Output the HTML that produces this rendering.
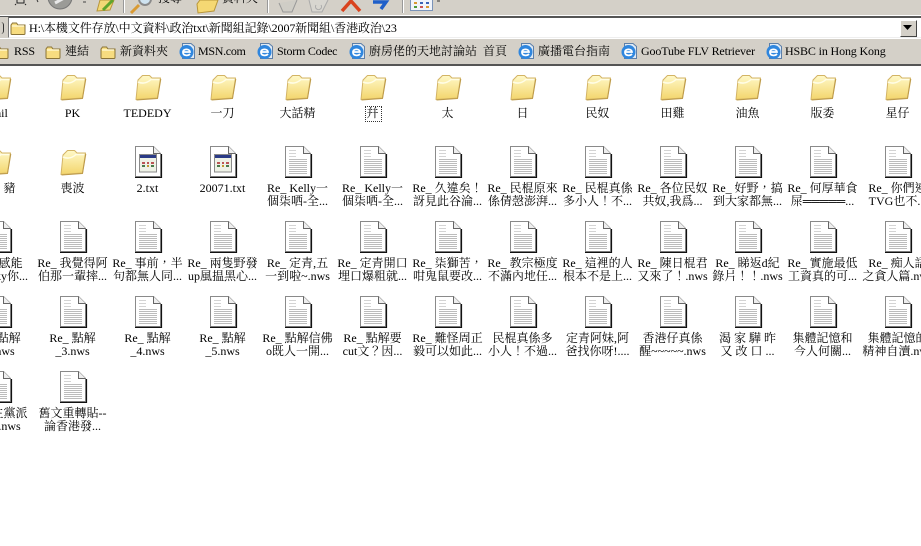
<!DOCTYPE html>
<html lang="zh-Hant"><head><meta charset="utf-8"><title>香港政治</title>
<style>
html,body{margin:0;padding:0;background:#fff}
body{width:921px;height:546px;position:relative;overflow:hidden;font:12px/13px "Liberation Serif","WenQuanYi Zen Hei","Noto Serif CJK TC",serif;color:#000}
.a{position:absolute}
.t{position:absolute;white-space:nowrap}
.l{letter-spacing:-.14px}
#tb{left:0;top:0;width:921px;height:66px;background:#d4d0c8}
.ln{position:absolute;left:0;width:921px;height:1px}
#grid{position:absolute;left:-40px;top:71px;display:grid;grid-template-columns:repeat(13,75px);grid-auto-rows:75px}
.c{position:relative;text-align:center;white-space:nowrap}
.c svg{display:block;margin-left:21px;width:32px;height:32px}
.c div{margin-top:4px;display:flex;flex-direction:column;align-items:center}
.c span{display:block;white-space:nowrap;position:relative}
</style></head><body>
<svg width="0" height="0" style="position:absolute"><defs>
<linearGradient id="fg" x1="0" y1="0" x2="0" y2="1"><stop offset="0" stop-color="#fff9c8"/><stop offset="1" stop-color="#f3d56c"/></linearGradient>
<symbol id="f" viewBox="0 0 32 32"><path d="M5 28.500 L7 9 L11.500 4.500 L18.500 4.500 L21 7 L29.500 7 L26.500 27 Z" fill="url(#fg)" stroke="#d3b465" stroke-linejoin="round"/><path d="M7 11 Q14 14 20 8.500 L28.500 8.500" fill="none" stroke="#fffde6" stroke-width="1.500"/><path d="M5.500 29 L26.500 27.500 L29.800 8" fill="none" stroke="#bd9a48" stroke-linejoin="round"/></symbol>
<symbol id="d" viewBox="0 0 32 32"><path d="M4.500 .5H22.500L29.500 7.500V30.500H4.500Z" fill="#fff" stroke="#8a8a8a"/><path d="M22.500 .5V7.500H29.500" fill="#eee" stroke="#666"/><path d="M30.500 8V31.500H4" fill="none" stroke="#111" stroke-width="1.200"/><path d="M8 4.500h7M8 7.500h7M8 10.500h7" stroke="#d4d4d4"/><path d="M8 13.500h18M8 15.500h18M8 17.500h18M8 19.500h18M8 21.500h18M8 23.500h18M8 25.500h18M8 27.500h18" stroke="#bcbcbc"/></symbol>
<symbol id="x" viewBox="0 0 32 32"><path d="M4.500 .5H22.500L29.500 7.500V30.500H4.500Z" fill="#fff" stroke="#8a8a8a"/><path d="M22.500 .5V7.500H29.500" fill="#eee" stroke="#666"/><path d="M30.500 8V31.500H4" fill="none" stroke="#111" stroke-width="1.200"/><rect x="8.500" y="8.500" width="17" height="17.500" fill="#eef2e6" stroke="#8a8a8a"/><rect x="9" y="9" width="16" height="3" fill="#2a3a86"/><path d="M11 17h3M16 17h2M20 17h3" stroke="#b55" stroke-width="2"/><path d="M11 20h3" stroke="#4a7a4a" stroke-width="2"/><path d="M16 20h2" stroke="#c09a30" stroke-width="2"/><path d="M20 20h3" stroke="#4a7a4a" stroke-width="2"/></symbol>
<symbol id="sf" viewBox="0 0 16 16"><path d="M1 5V13.500Q1 14.500 2 14.500H14Q15 14.500 15 13.500V5H8L6.500 3H2.500Z" fill="#f7dc80" stroke="#8a7338"/><path d="M2 6h12" stroke="#fff6cc" stroke-width="1.500"/></symbol>
<symbol id="ie" viewBox="0 0 16 16"><path d="M3.500 .5H12L15.500 3.500V15.500H3.500Z" fill="#dfeaf5" stroke="#5d7fa8"/><circle cx="7.500" cy="9" r="7" fill="#2f86de"/><path d="M4 9H11C11 5.800 4 5.200 4 9.200C4 12.800 8.800 13.200 11 11" fill="none" stroke="#fff" stroke-width="1.800"/></symbol>
</defs></svg>

<div id="tb" class="a"></div>
<div class="ln" style="top:15px;background:#fff"></div>
<div class="ln" style="top:16px;background:#555"></div>
<div class="ln" style="top:38px;background:#fff"></div>
<div class="ln" style="top:64px;height:2px;background:#555"></div>

<!-- toolbar clipped icons -->
<svg class="a" style="left:0;top:0" width="450" height="15" viewBox="0 0 450 15">
<path d="M17 0v3h7v-3M16 4l-1 1M25 4l1 1" stroke="#222" fill="none"/>
<path d="M37 0l1 2" stroke="#333"/>
<circle cx="60" cy="-3" r="12" fill="#9b9b97" stroke="#777"/><path d="M55 3 L66 -3" stroke="#e8e8e8" stroke-width="3"/>
<path d="M83 2h3" stroke="#444"/>
<path d="M97 11 L100 0H114L110 10Z" fill="#f3d875" stroke="#b8963a"/><path d="M103 10 L113 0" stroke="#5fa52c" stroke-width="3"/>
<path d="M123.500 0V13" stroke="#999"/><path d="M124.500 0V13" stroke="#fff"/>
<path d="M131 13 L139 5" stroke="#d99a33" stroke-width="3"/><circle cx="145" cy="-1" r="6" fill="#cfe3f0" stroke="#8a8a8a" stroke-width="2"/>
<path d="M197 4 L200 0H218L214 11 L198 13Z" fill="#f5d873" stroke="#b8963a"/>
<path d="M267.500 0V13" stroke="#999"/><path d="M268.500 0V13" stroke="#fff"/>
<path d="M279 3 L283 12H292L297 0" fill="#cfcdc6" stroke="#999"/>
<path d="M309 0 L312 12H322L328 0" fill="#d8d6d0" stroke="#aaa"/><path d="M316 5a3 3 0 1 0 5 0" fill="none" stroke="#aaa"/>
<path d="M342 11 L351 1 L360 11" fill="none" stroke="#d9431e" stroke-width="3.500"/>
<path d="M373 2 H386 L381 9" fill="none" stroke="#1f5fc9" stroke-width="3.500"/>
<path d="M402.500 0V13" stroke="#999"/><path d="M403.500 0V13" stroke="#fff"/>
<rect x="410.500" y="-2" width="22" height="12.500" fill="#f0f4fb" stroke="#7a93b8"/>
<path d="M414 3h3" stroke="#d99a33" stroke-width="2"/><path d="M420 3h3" stroke="#3c63b5" stroke-width="2"/><path d="M426 3h3" stroke="#3c63b5" stroke-width="2"/>
<path d="M414 7h3" stroke="#4d9a3b" stroke-width="2"/><path d="M420 7h3" stroke="#c55" stroke-width="2"/><path d="M426 7h3" stroke="#d99a33" stroke-width="2"/>
<path d="M437 1h3" stroke="#333"/>
</svg>
<div class="t" style="left:158px;top:-8px">搜尋</div>
<div class="t" style="left:222px;top:-8px">資料夾</div>

<!-- address bar -->
<div class="t" style="left:0;top:22px;width:3px;height:12px;border-right:1px solid #333;border-radius:0 3px 3px 0"></div>
<div class="a" style="left:8px;top:17px;width:913px;height:19px;background:#fff;border-top:1px solid #555;border-left:1px solid #777;border-bottom:1px solid #eee"></div>
<svg class="a" style="left:10px;top:20px" width="16" height="16"><use href="#sf"/></svg>
<div class="t" style="left:29px;top:22px;letter-spacing:-.1px">H:\本機文件存放\中文資料\政治txt\新聞組記錄\2007新聞組\香港政治\23</div>
<div class="a" style="left:900px;top:20px;width:15px;height:15px;background:#d4d0c8;border:1px solid;border-color:#fff #444 #444 #fff"></div>
<svg class="a" style="left:903px;top:25px" width="10" height="6"><path d="M0 0H9L4.500 5Z" fill="#000"/></svg>

<!-- links bar -->
<svg class="a" style="left:-7px;top:44px" width="16" height="16"><use href="#sf"/></svg>
<div class="t l" style="left:14px;top:45px">RSS</div>
<svg class="a" style="left:45px;top:44px" width="16" height="16"><use href="#sf"/></svg>
<div class="t" style="left:65px;top:45px">連結</div>
<svg class="a" style="left:100px;top:44px" width="16" height="16"><use href="#sf"/></svg>
<div class="t" style="left:120px;top:45px">新資料夾</div>
<svg class="a" style="left:179px;top:43px" width="16" height="16"><use href="#ie"/></svg>
<div class="t l" style="left:198px;top:45px;letter-spacing:-.3px">MSN.com</div>
<svg class="a" style="left:257px;top:43px" width="16" height="16"><use href="#ie"/></svg>
<div class="t l" style="left:277px;top:45px;letter-spacing:-.25px">Storm Codec</div>
<svg class="a" style="left:349px;top:43px" width="16" height="16"><use href="#ie"/></svg>
<div class="t" style="left:369px;top:45px">廚房佬的天地討論站</div>
<div class="t" style="left:483px;top:45px">首頁</div>
<svg class="a" style="left:518px;top:43px" width="16" height="16"><use href="#ie"/></svg>
<div class="t" style="left:538px;top:45px">廣播電台指南</div>
<svg class="a" style="left:621px;top:43px" width="16" height="16"><use href="#ie"/></svg>
<div class="t l" style="left:641px;top:45px">GooTube FLV Retriever</div>
<svg class="a" style="left:766px;top:43px" width="16" height="16"><use href="#ie"/></svg>
<div class="t l" style="left:785px;top:45px">HSBC in Hong Kong</div>

<!-- focus box -->
<div class="a" style="left:365px;top:106px;width:15px;height:14px;border:1px dotted #333"></div>

<div id="grid">
<!-- row 1 -->
<div class="c"><svg><use href="#f"/></svg><div><span style="left:-4px">Email</span></div></div>
<div class="c"><svg><use href="#f"/></svg><div><span>PK</span></div></div>
<div class="c"><svg><use href="#f"/></svg><div><span>TEDEDY</span></div></div>
<div class="c"><svg><use href="#f"/></svg><div><span>一刀</span></div></div>
<div class="c"><svg><use href="#f"/></svg><div><span>大話精</span></div></div>
<div class="c"><svg><use href="#f"/></svg><div><span>幷</span></div></div>
<div class="c"><svg><use href="#f"/></svg><div><span>太</span></div></div>
<div class="c"><svg><use href="#f"/></svg><div><span>日</span></div></div>
<div class="c"><svg><use href="#f"/></svg><div><span>民奴</span></div></div>
<div class="c"><svg><use href="#f"/></svg><div><span>田雞</span></div></div>
<div class="c"><svg><use href="#f"/></svg><div><span>油魚</span></div></div>
<div class="c"><svg><use href="#f"/></svg><div><span>版委</span></div></div>
<div class="c"><svg><use href="#f"/></svg><div><span>星仔</span></div></div>
<!-- row 2 -->
<div class="c"><svg><use href="#f"/></svg><div><span style="left:12px">豬</span></div></div>
<div class="c"><svg><use href="#f"/></svg><div><span>喪波</span></div></div>
<div class="c"><svg><use href="#x"/></svg><div><span>2.txt</span></div></div>
<div class="c"><svg><use href="#x"/></svg><div><span>20071.txt</span></div></div>
<div class="c"><svg><use href="#d"/></svg><div><span>Re_ Kelly一</span><span>個柒哂-全...</span></div></div>
<div class="c"><svg><use href="#d"/></svg><div><span>Re_ Kelly一</span><span>個柒哂-全...</span></div></div>
<div class="c"><svg><use href="#d"/></svg><div><span>Re_ 久違矣！</span><span>訝見此谷淪...</span></div></div>
<div class="c"><svg><use href="#d"/></svg><div><span>Re_ 民棍原來</span><span>係倩愨澎湃...</span></div></div>
<div class="c"><svg><use href="#d"/></svg><div><span>Re_ 民棍真係</span><span>多小人！不...</span></div></div>
<div class="c"><svg><use href="#d"/></svg><div><span>Re_ 各位民奴</span><span>共奴,我爲...</span></div></div>
<div class="c"><svg><use href="#d"/></svg><div><span>Re_ 好野，搞</span><span>到大家都無...</span></div></div>
<div class="c"><svg><use href="#d"/></svg><div><span>Re_ 何厚華食</span><span>屎═════...</span></div></div>
<div class="c"><svg><use href="#d"/></svg><div><span>Re_ 你們連</span><span>TVG也不...</span></div></div>
<!-- row 3 -->
<div class="c"><svg><use href="#d"/></svg><div><span style="left:2px">Re_ 感能</span><span>係sexky你...</span></div></div>
<div class="c"><svg><use href="#d"/></svg><div><span>Re_ 我覺得阿</span><span>伯那一輩摔...</span></div></div>
<div class="c"><svg><use href="#d"/></svg><div><span>Re_ 事前，半</span><span>句都無人同...</span></div></div>
<div class="c"><svg><use href="#d"/></svg><div><span>Re_ 兩隻野發</span><span>up風揾黑心...</span></div></div>
<div class="c"><svg><use href="#d"/></svg><div><span>Re_ 定青,五</span><span>一到啦~.nws</span></div></div>
<div class="c"><svg><use href="#d"/></svg><div><span>Re_ 定青開口</span><span>埋口爆粗就...</span></div></div>
<div class="c"><svg><use href="#d"/></svg><div><span>Re_ 柒獅苦，</span><span>咁鬼鼠要改...</span></div></div>
<div class="c"><svg><use href="#d"/></svg><div><span>Re_ 教宗極度</span><span>不滿內地任...</span></div></div>
<div class="c"><svg><use href="#d"/></svg><div><span>Re_ 這裡的人</span><span>根本不是上...</span></div></div>
<div class="c"><svg><use href="#d"/></svg><div><span>Re_ 陳日棍君</span><span>又來了！.nws</span></div></div>
<div class="c"><svg><use href="#d"/></svg><div><span>Re_ 睇返d紀</span><span>錄片！！.nws</span></div></div>
<div class="c"><svg><use href="#d"/></svg><div><span>Re_ 實施最低</span><span>工資真的可...</span></div></div>
<div class="c"><svg><use href="#d"/></svg><div><span>Re_ 痴人語</span><span>之貪人篇.nws</span></div></div>
<!-- row 4 -->
<div class="c"><svg><use href="#d"/></svg><div><span>Re_ 點解</span><span>_2.nws</span></div></div>
<div class="c"><svg><use href="#d"/></svg><div><span>Re_ 點解</span><span>_3.nws</span></div></div>
<div class="c"><svg><use href="#d"/></svg><div><span>Re_ 點解</span><span>_4.nws</span></div></div>
<div class="c"><svg><use href="#d"/></svg><div><span>Re_ 點解</span><span>_5.nws</span></div></div>
<div class="c"><svg><use href="#d"/></svg><div><span>Re_ 點解信佛</span><span>o既人一開...</span></div></div>
<div class="c"><svg><use href="#d"/></svg><div><span>Re_ 點解要</span><span>cut文？因...</span></div></div>
<div class="c"><svg><use href="#d"/></svg><div><span>Re_ 難怪周正</span><span>毅可以如此...</span></div></div>
<div class="c"><svg><use href="#d"/></svg><div><span>民棍真係多</span><span>小人！不過...</span></div></div>
<div class="c"><svg><use href="#d"/></svg><div><span>定青阿妹,阿</span><span>爸找你呀!....</span></div></div>
<div class="c"><svg><use href="#d"/></svg><div><span>香港仔真係</span><span>醒~~~~~.nws</span></div></div>
<div class="c"><svg><use href="#d"/></svg><div><span>渴 家 驊 昨</span><span>又 改 口 ...</span></div></div>
<div class="c"><svg><use href="#d"/></svg><div><span>集體記憶和</span><span>今人何關...</span></div></div>
<div class="c"><svg><use href="#d"/></svg><div><span>集體記憶的</span><span>精神自瀆.nws</span></div></div>
<!-- row 5 -->
<div class="c"><svg><use href="#d"/></svg><div><span>親民主黨派</span><span>黨派.nws</span></div></div>
<div class="c"><svg><use href="#d"/></svg><div><span>舊文重轉貼--</span><span>論香港發...</span></div></div>
</div>
</body></html>
